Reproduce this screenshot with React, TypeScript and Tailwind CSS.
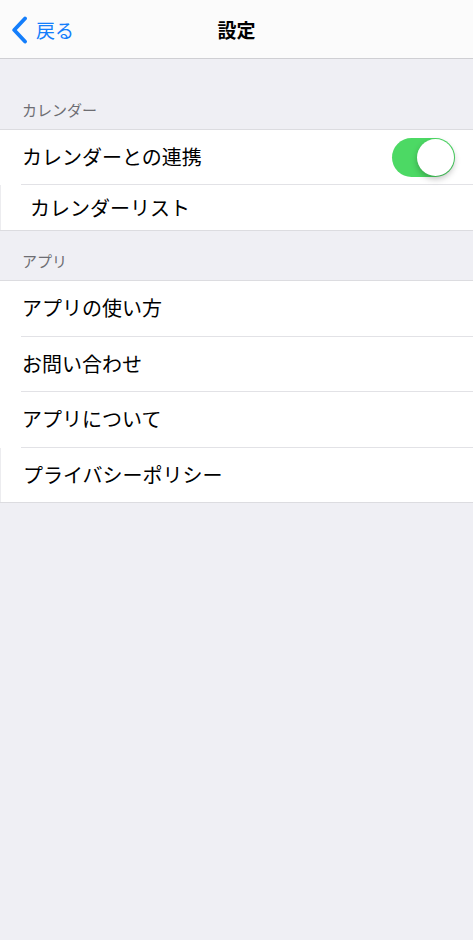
const font = "font-['Noto_Sans_CJK_JP','Noto_Sans',sans-serif]";

const SectionHeader = ({ title, height }: { title: string; height: string }) => (
  <div className={`${height} flex items-end px-[22px] pb-[11px]`}>
    <span className="text-[15px] leading-[16px] text-[#6d6d72]">{title}</span>
  </div>
);

const Toggle = () => (
  <div className="relative w-[63px] h-[39px] rounded-full bg-[#4cd964]">
    <div className="absolute right-[1px] top-[1px] w-[37px] h-[37px] rounded-full bg-white shadow-[0_3px_6px_rgba(0,0,0,0.25)]" />
  </div>
);

export default function App() {
  const appRows = ["アプリの使い方", "お問い合わせ", "アプリについて", "プライバシーポリシー"];

  return (
    <div className={`${font} w-full min-h-[940px] bg-[#efeff4] text-black`}>
      {/* NAV */}
      <div className="h-[59px] bg-[#fbfbfb] border-b border-[#cfcfd3] flex items-center relative">
        <div className="flex items-center pl-[11px] text-[#147efb]">
          <svg width="17" height="28" viewBox="0 0 17 28" className="mt-[1px]">
            <path d="M14 2.5 L3.2 14 L14 25.5" fill="none" stroke="#147efb" strokeWidth="3.8" strokeLinecap="round" strokeLinejoin="round" />
          </svg>
          <span className="ml-[8px] text-[19px] leading-none">戻る</span>
        </div>
        <div className="absolute inset-0 flex items-center justify-center pointer-events-none">
          <span className="text-[19px] font-bold leading-none">設定</span>
        </div>
      </div>

      <SectionHeader title="カレンダー" height="h-[70px]" />
      <div className="bg-white border-y border-[#dcdce0]">
        <div className="h-[54px] flex items-center justify-between pl-[22px] pr-[18px]">
          <span className="text-[20px] leading-none">カレンダーとの連携</span>
          <Toggle />
        </div>
        <div className="ml-[21px] h-px bg-[#e2e2e6]" />
        <div className="h-[45px] flex items-center pl-[29px] border-l border-[#ececef]">
          <span className="text-[20px] leading-none">カレンダーリスト</span>
        </div>
      </div>

      <SectionHeader title="アプリ" height="h-[49px]" />
      <div className="bg-white border-y border-[#dcdce0]">
        {appRows.map((label, i) => (
          <div key={label}>
            {i !== 0 && <div className="ml-[21px] h-px bg-[#e2e2e6]" />}
            <div className={`h-[54.5px] flex items-center pl-[22px] ${i === appRows.length - 1 ? "border-l border-[#ececef]" : ""}`}>
              <span className="text-[20px] leading-none">{label}</span>
            </div>
          </div>
        ))}
      </div>
    </div>
  );
}
